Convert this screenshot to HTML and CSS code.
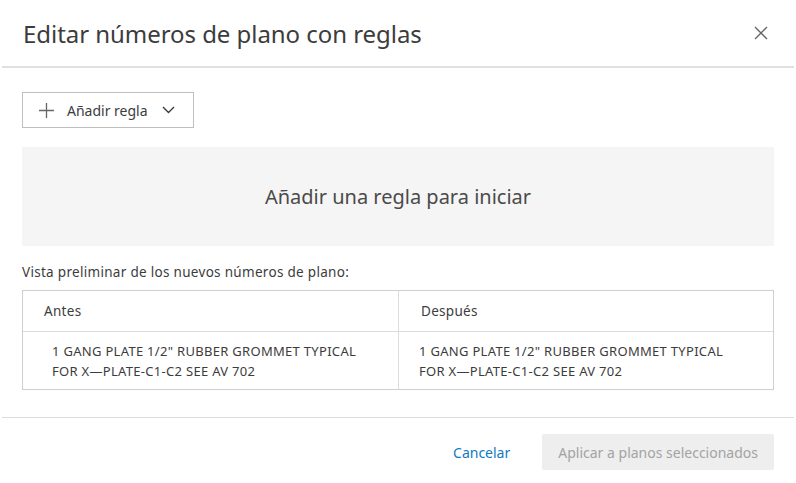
FILE: index.html
```html
<!DOCTYPE html>
<html lang="es">
<head>
    <meta charset="UTF-8">
    <title>Editar números de plano con reglas</title>
    <link rel="stylesheet" href="styles.css">
</head>
<body>
    <div class="dialog">
        <!-- Header -->
        <div class="dialog-header">
            <h1 class="title">Editar números de plano con reglas</h1>
            <button class="close-button" aria-label="Cerrar">
                <svg width="14" height="14" viewBox="0 0 14 14"><path d="M1 1 L13 13 M13 1 L1 13" stroke="#666" stroke-width="1.4" fill="none"/></svg>
            </button>
        </div>

        <div class="dialog-body">
            <button class="add-rule">
                <svg width="15" height="15" viewBox="0 0 15 15"><path d="M7.5 0 V15 M0 7.5 H15" stroke="#666" stroke-width="1.3" fill="none"/></svg>
                <span>Añadir regla</span>
                <svg width="13" height="8" viewBox="0 0 13 8"><path d="M1 1 L6.5 6.5 L12 1" stroke="#3c3c3c" stroke-width="1.4" fill="none"/></svg>
            </button>

            <div class="empty-box">Añadir una regla para iniciar</div>

            <div class="preview-label">Vista preliminar de los nuevos números de plano:</div>

            <div class="preview-table">
                <div class="cell head">Antes</div>
                <div class="cell head">Después</div>
                <div class="cell value">1 GANG PLATE 1/2" RUBBER GROMMET TYPICAL<br>FOR X—PLATE-C1-C2 SEE AV 702</div>
                <div class="cell value">1 GANG PLATE 1/2" RUBBER GROMMET TYPICAL<br>FOR X—PLATE-C1-C2 SEE AV 702</div>
            </div>
        </div>

        <!-- Footer -->
        <div class="dialog-footer">
            <button class="link-button">Cancelar</button>
            <button class="primary-button" disabled>Aplicar a planos seleccionados</button>
        </div>
    </div>
</body>
</html>
```

FILE: styles.css
```css
body, html {
    margin: 0;
    padding: 0;
    background: #fff;
}

body {
    font-family: "Noto Sans", "Open Sans", sans-serif;
    color: #3c3c3c;
}

button {
    font-family: inherit;
    background: none;
    border: none;
    padding: 0;
    cursor: pointer;
}

.dialog {
    width: 796px;
    height: 483px;
}

.dialog-header {
    display: flex;
    align-items: center;
    justify-content: space-between;
    height: 66px;
    margin: 0 2px;
    padding: 0 26px 0 21px;
    border-bottom: 2px solid #e0e0e0;
}

.title {
    margin: 0;
    font-size: 24px;
    font-weight: 400;
    color: #3c3c3c;
    letter-spacing: -0.05px;
}

.close-button {
    display: flex;
}

.dialog-body {
    padding: 24px 22px 0;
}

.add-rule {
    display: flex;
    align-items: center;
    width: 172px;
    height: 36px;
    padding: 0 0 0 16px;
    border: 1px solid #bfbfbf;
    font-size: 14px;
    color: #3c3c3c;
}

.add-rule span {
    margin: 0 14px 0 13px;
}

.empty-box {
    display: flex;
    align-items: center;
    justify-content: center;
    height: 99px;
    margin-top: 19px;
    background: #f5f5f5;
    font-size: 20px;
    color: #4a4a4a;
}

.preview-label {
    margin-top: 17px;
    font-size: 13.5px;
    line-height: 18px;
    letter-spacing: 0.3px;
    color: #3c3c3c;
}

.preview-table {
    display: grid;
    grid-template-columns: 376px 1fr;
    margin-top: 9px;
    border: 1px solid #cfcfcf;
}

.cell {
    font-size: 13.5px;
    color: #3c3c3c;
    letter-spacing: 0.3px;
}

.cell.head {
    height: 40px;
    line-height: 40px;
    padding-left: 21px;
    border-bottom: 1px solid #dcdcdc;
}

.cell.value {
    padding: 9px 0 8px 29px;
    line-height: 20px;
    font-size: 13px;
}

.cell:nth-child(odd) {
    border-right: 1px solid #dcdcdc;
}

.cell.value:nth-child(even) {
    padding-left: 20px;
}

.cell.head:nth-child(even) {
    padding-left: 22px;
}

.dialog-footer {
    display: flex;
    align-items: center;
    justify-content: flex-end;
    gap: 32px;
    margin: 27px 2px 0;
    padding: 16px 20px 0 0;
    border-top: 1px solid #dcdcdc;
}

.link-button {
    font-size: 14px;
    color: #0f7ac0;
}

.primary-button {
    height: 36px;
    padding: 0 16px;
    background: #eeeeee;
    border-radius: 2px;
    font-size: 14px;
    color: #a3a3a3;
    cursor: default;
}
```
